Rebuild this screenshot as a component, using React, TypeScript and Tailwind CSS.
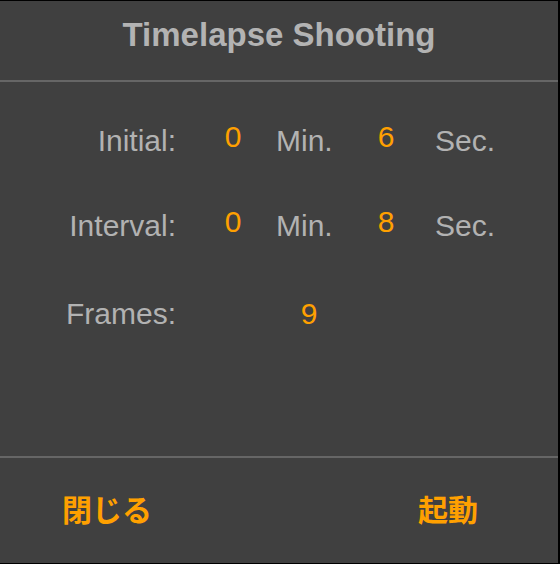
import React from "react";

const sans = "font-['Liberation_Sans','Helvetica',Arial,sans-serif]";
const cjk = "font-['Liberation_Sans','Noto_Sans_CJK_JP',sans-serif]";

type RowProps = {
  label: string;
  min: string;
  sec: string;
};

const TimeRow: React.FC<RowProps> = ({ label, min, sec }) => (
  <div className="flex items-start text-[30px] leading-[30px]">
    <span className="w-[176px] pt-[4px] text-right text-[#b2b2b2]">{label}</span>
    <span className="ml-[32px] w-[50px] text-center text-[#ffa000]">{min}</span>
    <span className="ml-[18px] w-[84px] pt-[4px] text-[#b2b2b2]">Min.</span>
    <span className="w-[52px] text-center text-[#ffa000]">{sec}</span>
    <span className="ml-[23px] pt-[4px] text-[#b2b2b2]">Sec.</span>
  </div>
);

export default function App() {
  return (
    <div className="w-[560px] h-[564px] bg-black pt-px pr-[2px] pb-px">
      <div className={`flex h-full flex-col bg-[#404040] ${sans}`}>
        {/* header */}
        <div className="h-[79px] pt-[17px] text-center">
          <span className="text-[33px] leading-[33px] font-bold text-[#b3b3b3]">
            Timelapse Shooting
          </span>
        </div>
        <div className="h-[2px] bg-[#666666]" />

        {/* settings */}
        <div className="flex-1 pt-[40px]">
          <TimeRow label="Initial:" min="0" sec="6" />
          <div className="mt-[51px]">
            <TimeRow label="Interval:" min="0" sec="8" />
          </div>
          <div className="mt-[54px] flex items-start text-[30px] leading-[30px]">
            <span className="w-[176px] pt-[4px] text-right text-[#b2b2b2]">Frames:</span>
            <span className="ml-[108px] w-[50px] pt-[4px] text-center text-[#ffa000]">9</span>
          </div>
        </div>

        <div className="h-[2px] bg-[#666666]" />
        {/* buttons */}
        <div className={`flex h-[105px] items-center justify-between pl-[62px] pr-[80px] text-[30px] font-bold text-[#ffa000] ${cjk}`}>
          <button type="button">閉じる</button>
          <button type="button">起動</button>
        </div>
      </div>
    </div>
  );
}
